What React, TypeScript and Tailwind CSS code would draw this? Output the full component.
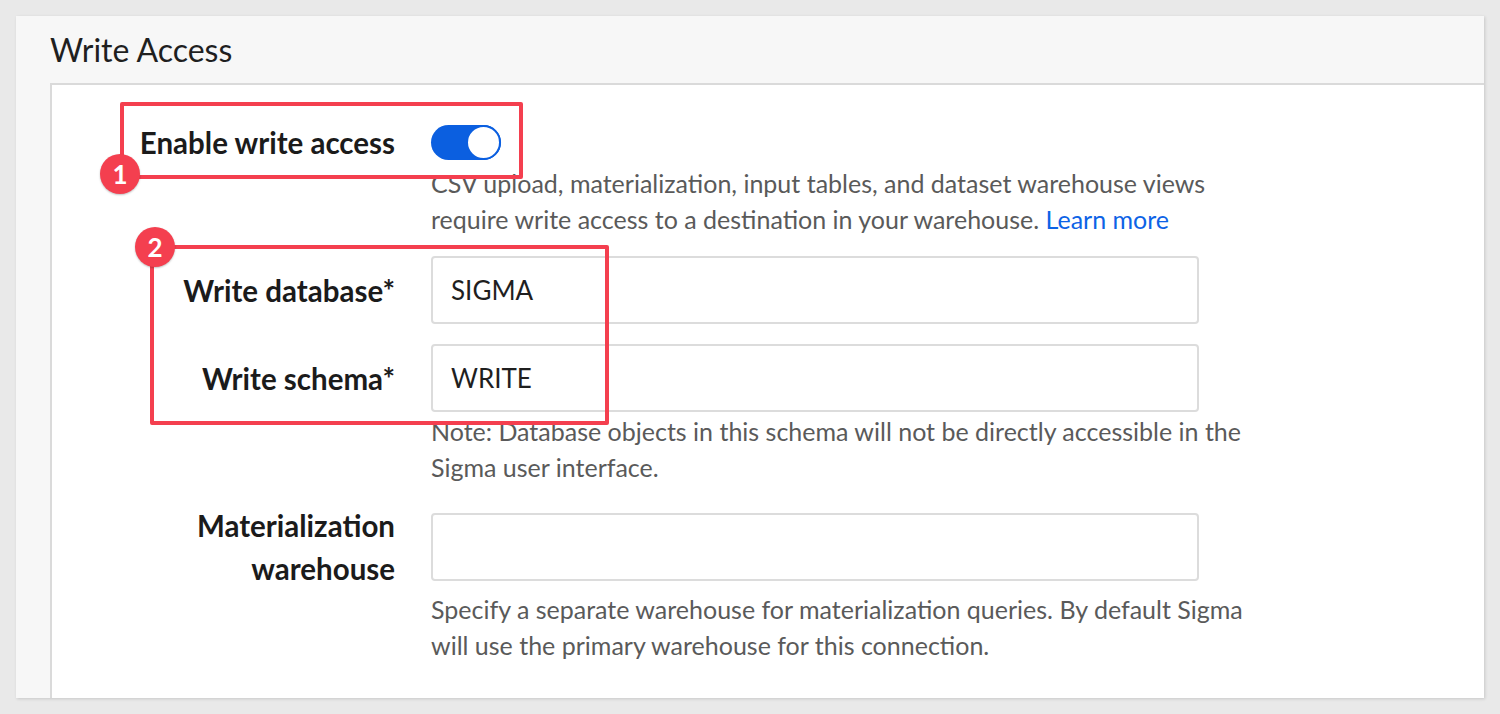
import { ReactNode } from "react";

const font = { fontFamily: "Lato, 'Open Sans', sans-serif" };

interface RowProps {
  label: ReactNode;
  children: ReactNode;
  className?: string;
}

const Row = ({ label, children, className = "" }: RowProps) => (
  <div className={`flex items-center gap-[36px] ${className}`}>
    <div className="w-[343px] shrink-0 text-right text-[29.5px] font-bold leading-[43px] text-[#1b1b1b]">
      {label}
    </div>
    <div className="w-[768px]">{children}</div>
  </div>
);

const Input = ({ value }: { value?: string }) => (
  <div className="flex h-[68px] w-[768px] items-center rounded-[4px] border-2 border-[#dcdcdc] bg-white px-[18px] text-[26px] text-[#1f1f1f]">
    {value}
  </div>
);

const Help = ({ children, className = "" }: { children: ReactNode; className?: string }) => (
  <p className={`ml-[379px] text-[25px] leading-[36px] text-[#5a5a5a] ${className}`}>
    {children}
  </p>
);

const Badge = ({ n, className }: { n: number; className: string }) => (
  <div
    className={`absolute flex h-[40px] w-[40px] items-center justify-center rounded-full bg-[#f43f4f] text-[26px] font-bold text-white shadow-[0_1px_2px_rgba(0,0,0,0.25)] ${className}`}>
    {n}
  </div>
);

export default function App() {
  return (
    <div className="relative h-[714px] w-[1500px] bg-[#e9e9e9] p-4" style={font}>
      <div className="flex h-[682px] w-[1468px] flex-col bg-[#f7f7f7] shadow-[1px_1px_3px_rgba(0,0,0,0.15)]">
        {/* Header */}
        <div className="flex h-[67px] shrink-0 items-center pl-[34px]">
          <h2 className="text-[32px] font-normal text-[#1f1f1f]">Write Access</h2>
        </div>

        {/* Panel */}
        <div className="ml-[34px] flex-1 border-l-2 border-t-2 border-[#dadada] bg-white pt-[40px]">
          <Row label="Enable write access" className="h-[35px]">
            <div className="flex h-[35px] w-[70px] items-center justify-end rounded-full bg-[#0b5fe0]">
              <div className="h-[35px] w-[35px] rounded-full border-2 border-[#0b5fe0] bg-white" />
            </div>
          </Row>
          <Help className="mt-[5px]">
            CSV upload, materialization, input tables, and dataset warehouse views
            <br />
            require write access to a destination in your warehouse.{" "}
            <span className="text-[#0d63e6]">Learn more</span>
          </Help>

          <Row label="Write database*" className="mt-[19px]">
            <Input value="SIGMA" />
          </Row>
          <Row label="Write schema*" className="mt-[20px]">
            <Input value="WRITE" />
          </Row>
          <Help className="mt-[1px]">
            Note: Database objects in this schema will not be directly accessible in the
            <br />
            Sigma user interface.
          </Help>

          <Row
            label={
              <>
                Materialization
                <br />
                warehouse
              </>
            }
            className="mt-[19px]">
            <Input />
          </Row>
          <Help className="mt-[1px]">
            Specify a separate warehouse for materialization queries. By default Sigma
            <br />
            will use the primary warehouse for this connection.
          </Help>
        </div>
      </div>

      {/* Annotations */}
      <div className="absolute left-[120px] top-[102px] h-[77px] w-[403px] rounded-[2px] border-4 border-[#f43f4f]" />
      <Badge n={1} className="left-[100px] top-[154px]" />
      <div className="absolute left-[150px] top-[245px] h-[180px] w-[459px] rounded-[2px] border-4 border-[#f43f4f]" />
      <Badge n={2} className="left-[135px] top-[227px]" />
    </div>
  );
}
